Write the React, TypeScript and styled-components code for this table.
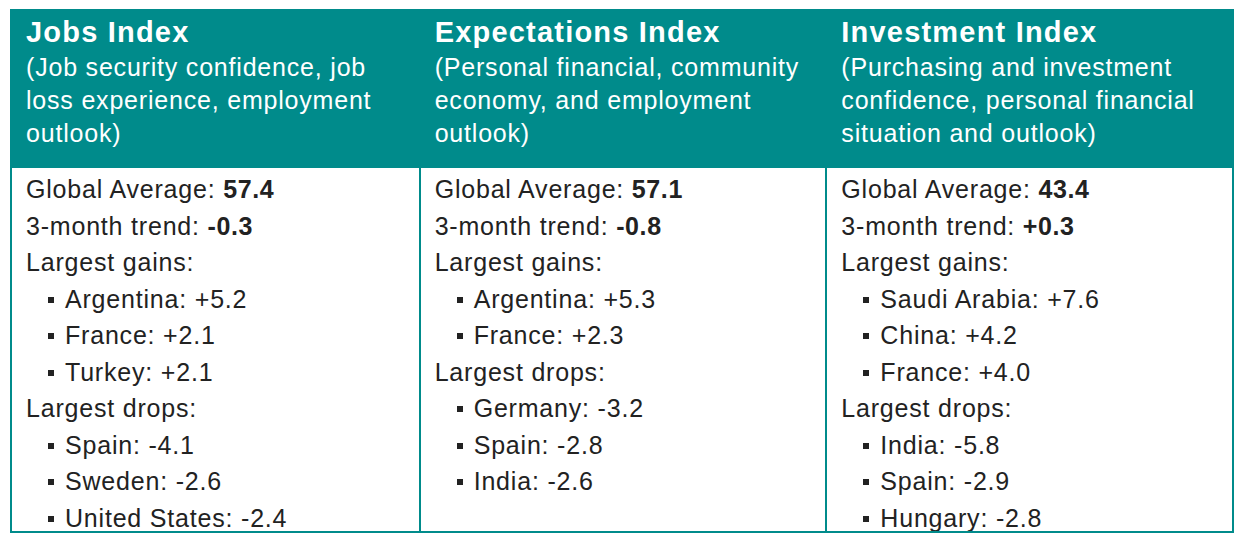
import styled, { createGlobalStyle } from 'styled-components';

const GlobalStyle = createGlobalStyle`
  body {
    margin: 0;
    background: #ffffff;
    font-family: "Liberation Sans", Arial, sans-serif;
  }
`;

const TEAL = '#008b8b';

type Entry = { label: string; value: string };

type IndexColumn = {
  title: string;
  subtitle: string[];
  average: string;
  trend: string;
  gains: Entry[];
  drops: Entry[];
};

const columns: IndexColumn[] = [
  {
    title: 'Jobs Index',
    subtitle: ['(Job security confidence, job', 'loss experience, employment', 'outlook)'],
    average: '57.4',
    trend: '-0.3',
    gains: [
      { label: 'Argentina', value: '+5.2' },
      { label: 'France', value: '+2.1' },
      { label: 'Turkey', value: '+2.1' },
    ],
    drops: [
      { label: 'Spain', value: '-4.1' },
      { label: 'Sweden', value: '-2.6' },
      { label: 'United States', value: '-2.4' },
    ],
  },
  {
    title: 'Expectations Index',
    subtitle: ['(Personal financial, community', 'economy, and employment', 'outlook)'],
    average: '57.1',
    trend: '-0.8',
    gains: [
      { label: 'Argentina', value: '+5.3' },
      { label: 'France', value: '+2.3' },
    ],
    drops: [
      { label: 'Germany', value: '-3.2' },
      { label: 'Spain', value: '-2.8' },
      { label: 'India', value: '-2.6' },
    ],
  },
  {
    title: 'Investment Index',
    subtitle: ['(Purchasing and investment', 'confidence, personal financial', 'situation and outlook)'],
    average: '43.4',
    trend: '+0.3',
    gains: [
      { label: 'Saudi Arabia', value: '+7.6' },
      { label: 'China', value: '+4.2' },
      { label: 'France', value: '+4.0' },
    ],
    drops: [
      { label: 'India', value: '-5.8' },
      { label: 'Spain', value: '-2.9' },
      { label: 'Hungary', value: '-2.8' },
    ],
  },
];

const Table = styled.div`
  margin: 9px 0 0 10px;
  width: 1224px;
  box-sizing: border-box;
  border: 2px solid ${TEAL};
  display: grid;
  grid-template-columns: repeat(3, 1fr);
  grid-template-rows: 157px 363px;
`;

const HeadCell = styled.div<{ $first?: boolean }>`
  background: ${TEAL};
  color: #ffffff;
  padding: 3px 10px 0 14px;
  border-left: ${(p) => (p.$first ? 'none' : `2px solid ${TEAL}`)};
`;

const Title = styled.div`
  font-size: 29px;
  font-weight: bold;
  line-height: 36px;
  letter-spacing: 1.2px;
  margin-bottom: 1px;
`;

const Subtitle = styled.div`
  font-size: 25px;
  line-height: 33px;
  letter-spacing: 0.8px;
`;

const BodyCell = styled.div<{ $first?: boolean }>`
  padding: 3px 10px 0 14px;
  overflow: hidden;
  color: #222222;
  border-left: ${(p) => (p.$first ? 'none' : `2px solid ${TEAL}`)};
`;

const Line = styled.div`
  font-size: 25px;
  line-height: 36.5px;
  letter-spacing: 0.8px;
  white-space: nowrap;
`;

const Value = styled.b`
  font-weight: bold;
  letter-spacing: 0.6px;
`;

const BulletLine = styled(Line)`
  display: flex;
  align-items: center;
  padding-left: 22px;
`;

const Bullet = styled.span`
  width: 6px;
  height: 6px;
  background: #222222;
  margin-right: 11px;
  flex-shrink: 0;
  position: relative;
  top: 1px;
`;

export default function App() {
  return (
    <>
      <GlobalStyle />
      <Table>
        {columns.map((c, i) => (
          <HeadCell key={c.title} $first={i === 0}>
            <Title>{c.title}</Title>
            {c.subtitle.map((s) => (
              <Subtitle key={s}>{s}</Subtitle>
            ))}
          </HeadCell>
        ))}
        {columns.map((c, i) => (
          <BodyCell key={c.title} $first={i === 0}>
            <Line>
              Global Average: <Value>{c.average}</Value>
            </Line>
            <Line>
              3-month trend: <Value>{c.trend}</Value>
            </Line>
            <Line>Largest gains:</Line>
            {c.gains.map((g) => (
              <BulletLine key={g.label}>
                <Bullet />
                {g.label}: {g.value}
              </BulletLine>
            ))}
            <Line>Largest drops:</Line>
            {c.drops.map((d) => (
              <BulletLine key={d.label}>
                <Bullet />
                {d.label}: {d.value}
              </BulletLine>
            ))}
          </BodyCell>
        ))}
      </Table>
    </>
  );
}
